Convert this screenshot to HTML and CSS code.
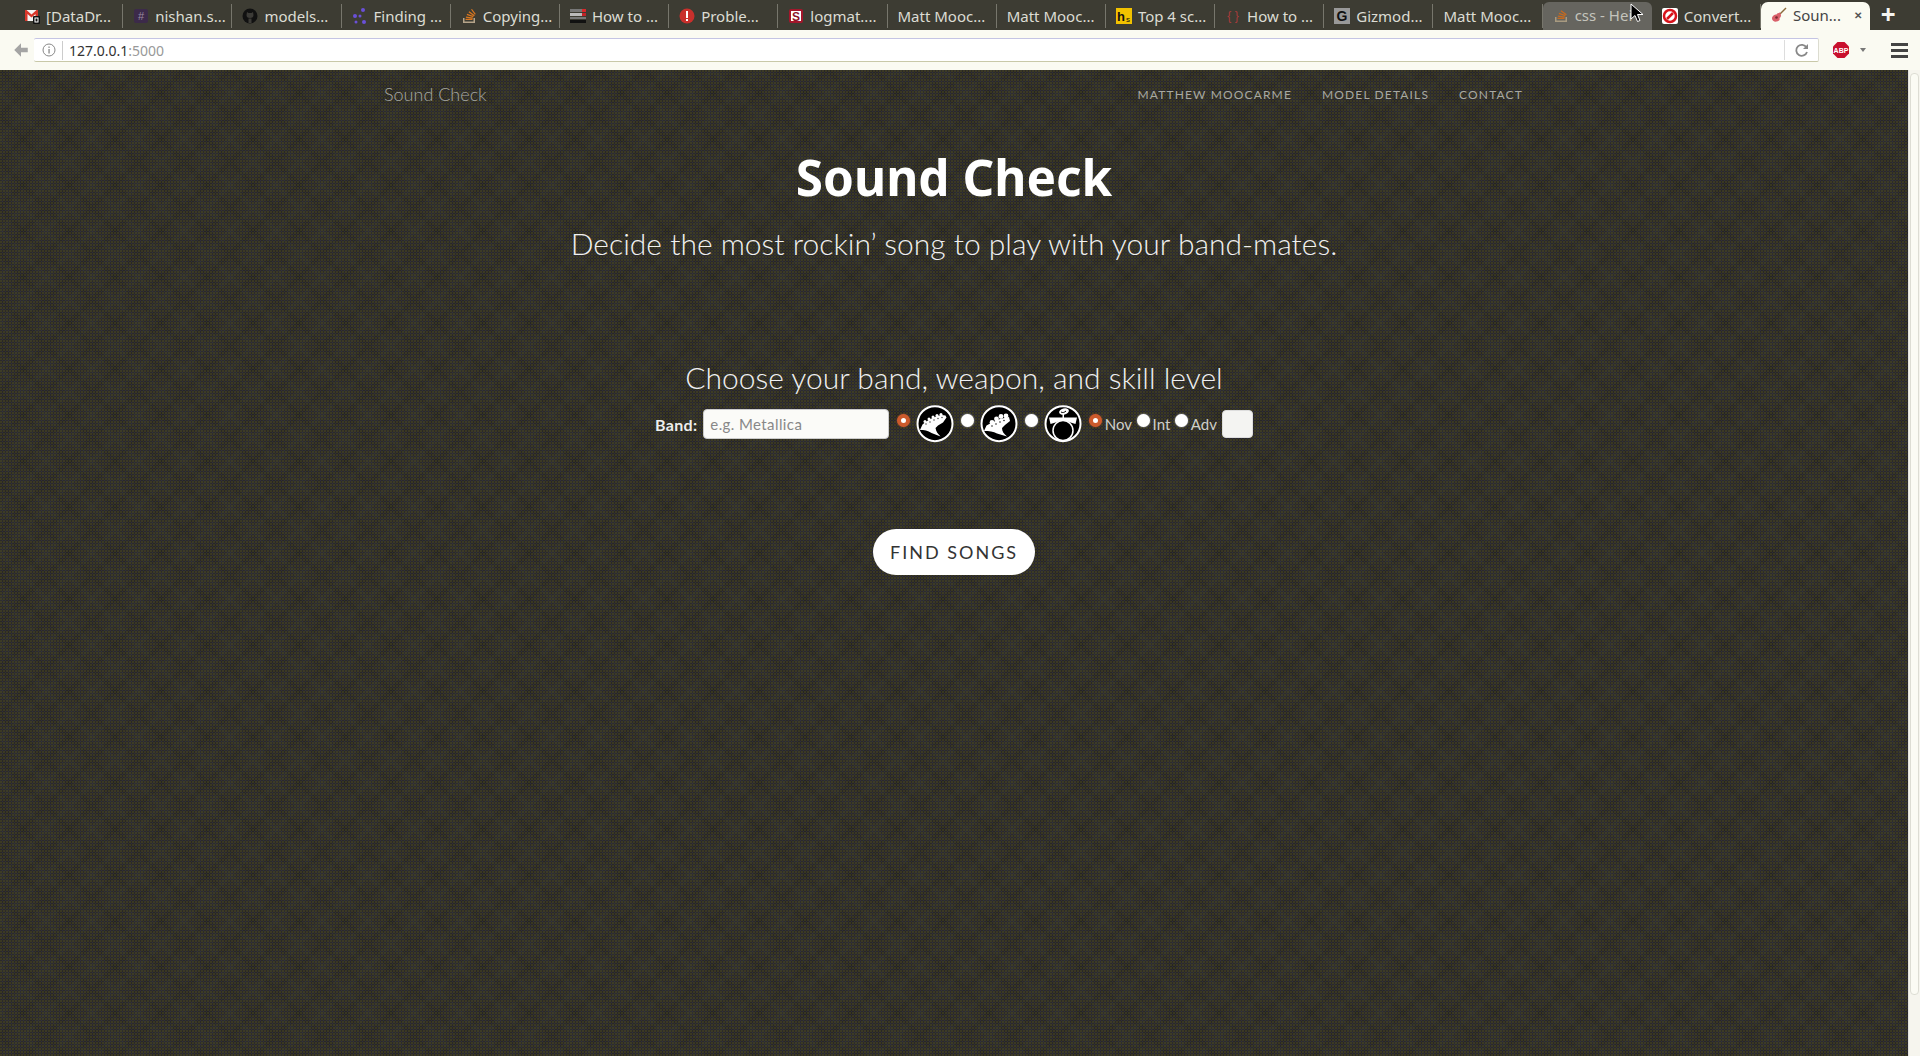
FILE: index.html
```html
<!DOCTYPE html>
<html lang="en">

<head>
    <meta charset="UTF-8">
    <meta name="viewport" content="width=device-width, initial-scale=1.0">
    <title>Sound Check</title>
    <link rel="stylesheet" href="styles.css">
</head>

<body>
    <!-- browser chrome -->
    <div class="tabstrip">
        <div class="tab">
            <svg class="favicon" viewBox="0 0 16 16"><rect x="1" y="2" width="13" height="11" fill="#f4f4f4"/><path d="M1 2v11h2.500V6L7.500 9.500 11.500 6v7H14V2h-1.500L7.500 6.500 2.500 2z" fill="#d8362a"/><rect x="9" y="8" width="7" height="8" rx="1" fill="#111"/><rect x="11" y="10" width="3" height="4" fill="none" stroke="#fff"/></svg>
            <span class="tab-label">[DataDr...</span>
        </div>
        <div class="tab">
            <svg class="favicon" viewBox="0 0 16 16"><rect x="1" y="1" width="14" height="14" rx="2" fill="#3c2a4a"/><text x="8" y="12" font-size="11" text-anchor="middle" fill="#9a8aa0" font-family="Liberation Sans">#</text></svg>
            <span class="tab-label">nishan.s...</span>
        </div>
        <div class="tab">
            <svg class="favicon" viewBox="0 0 16 16"><circle cx="8" cy="8" r="7.500" fill="#111"/><path d="M5 4l1.500 1h3L11 4l.5 3c0 2-1 3-3.500 3S4.500 9 4.500 7z" fill="#3c3b37"/><path d="M6.500 10.500h3V15h-3z" fill="#3c3b37"/></svg>
            <span class="tab-label">models...</span>
        </div>
        <div class="tab">
            <svg class="favicon" viewBox="0 0 16 16"><g fill="#6a50d8"><circle cx="3" cy="8" r="2"/><circle cx="11" cy="2" r="2"/><circle cx="8" cy="8" r="1.500"/><circle cx="4" cy="14" r="1.500"/><circle cx="12" cy="14" r="2"/></g></svg>
            <span class="tab-label">Finding ...</span>
        </div>
        <div class="tab">
            <svg class="favicon" viewBox="0 0 16 16"><path d="M2 10v5h12v-5h-1.500v3.500h-9V10z" fill="#b5a48a"/><path d="M4.500 12h7v-1.300h-7zM4.800 9.700l6.900 1 .2-1.200-6.900-1zM5.700 7l6.500 2.300.4-1.200-6.500-2.300zM7.500 4.300l5.500 4 .8-1-5.500-4zM10 1.500l3.800 5.300 1-.8L11 1z" fill="#d9761f"/></svg>
            <span class="tab-label">Copying...</span>
        </div>
        <div class="tab">
            <svg class="favicon" viewBox="0 0 16 16"><rect x="0" y="1" width="12" height="3" fill="#777"/><rect x="12" y="1" width="4" height="3" fill="#d8282a"/><rect x="0" y="5" width="12" height="3" fill="#bbb"/><rect x="12" y="5" width="4" height="3" fill="#c02428"/><rect x="0" y="9" width="16" height="2" fill="#777"/><rect x="0" y="12" width="16" height="3" fill="#111"/></svg>
            <span class="tab-label">How to ...</span>
        </div>
        <div class="tab">
            <svg class="favicon" viewBox="0 0 16 16"><circle cx="8" cy="8" r="7.500" fill="#c9302c"/><rect x="7" y="3" width="2" height="7" fill="#fff"/><rect x="7" y="11" width="2" height="2" fill="#fff"/></svg>
            <span class="tab-label">Proble...</span>
        </div>
        <div class="tab">
            <svg class="favicon" viewBox="0 0 16 16"><rect x="1" y="1" width="14" height="14" rx="2" fill="#a3162b"/><rect x="3" y="3" width="10" height="10" fill="#fff"/><text x="8" y="12.500" font-size="12" font-weight="700" text-anchor="middle" fill="#8c1226" font-family="Liberation Sans">S</text></svg>
            <span class="tab-label">logmat....</span>
        </div>
        <div class="tab no-icon"><span class="tab-label">Matt Mooc...</span></div>
        <div class="tab no-icon"><span class="tab-label">Matt Mooc...</span></div>
        <div class="tab">
            <svg class="favicon" viewBox="0 0 16 16"><rect width="16" height="16" fill="#f2c200"/><text x="5" y="13" font-size="13" font-weight="700" text-anchor="middle" fill="#111" font-family="Liberation Sans">h</text><text x="12" y="14" font-size="8" text-anchor="middle" fill="#111" font-family="Liberation Sans">s</text></svg>
            <span class="tab-label">Top 4 sc...</span>
        </div>
        <div class="tab">
            <svg class="favicon" viewBox="0 0 16 16"><text x="8" y="12" font-size="12" text-anchor="middle" fill="#a83b3b" font-family="Liberation Sans">{ }</text></svg>
            <span class="tab-label">How to ...</span>
        </div>
        <div class="tab">
            <svg class="favicon" viewBox="0 0 16 16"><rect width="16" height="16" fill="#999"/><text x="8" y="13" font-size="14" font-weight="700" text-anchor="middle" fill="#111" font-family="Liberation Sans">G</text></svg>
            <span class="tab-label">Gizmod...</span>
        </div>
        <div class="tab no-icon"><span class="tab-label">Matt Mooc...</span></div>
        <div class="tab hovered">
            <svg class="favicon" viewBox="0 0 16 16"><path d="M2 10v5h12v-5h-1.500v3.500h-9V10z" fill="#a89a80"/><path d="M4.500 12h7v-1.300h-7zM4.800 9.700l6.900 1 .2-1.200-6.900-1zM5.700 7l6.500 2.300.4-1.200-6.500-2.300zM7.500 4.300l5.500 4 .8-1-5.500-4z" fill="#c46a20"/></svg>
            <span class="tab-label">css - Hei</span>
        </div>
        <div class="tab">
            <svg class="favicon" viewBox="0 0 16 16"><rect width="16" height="16" rx="2" fill="#fff"/><circle cx="8" cy="8" r="6" fill="none" stroke="#d8141c" stroke-width="2.500"/><path d="M5 11l6-6" stroke="#d8141c" stroke-width="2.500"/></svg>
            <span class="tab-label">Convert...</span>
        </div>
        <div class="tab active">
            <svg class="favicon" viewBox="0 0 16 16"><path d="M15 1l-6 6" stroke="#8a6a3a" stroke-width="1.500"/><path d="M9 5.500c-2 .5-3 1-3.500 2C3.500 7.500 1 9 1 11.500S3.500 15 6 14.500s3-2 2.500-3.500c1-.5 1.500-1.500 1.500-3z" fill="#d9606a"/><circle cx="5.500" cy="10.500" r="1.300" fill="#7c2a30"/></svg>
            <span class="tab-label">Soun...</span>
            <span class="tab-close">&#10005;</span>
        </div>
        <div class="new-tab">+</div>
    </div>

    <div class="toolbar">
        <div class="back-btn">
            <svg viewBox="0 0 16 16" width="18" height="18"><path d="M8 2L2 8l6 6V10h6V6H8z" fill="#a4a4a4"/></svg>
        </div>
        <div class="omnibox">
            <svg class="info-icon" viewBox="0 0 14 14" width="14" height="14"><circle cx="7" cy="7" r="6" fill="none" stroke="#888"/><rect x="6.400" y="6" width="1.300" height="4.500" fill="#888"/><rect x="6.400" y="3.500" width="1.300" height="1.400" fill="#888"/></svg>
            <span class="url"><span class="url-host">127.0.0.1</span>:5000</span>
            <div class="reload">
                <svg viewBox="0 0 16 16" width="16" height="16"><path d="M12.500 5.500A5.500 5.500 0 1 0 13 10" fill="none" stroke="#888" stroke-width="1.800"/><path d="M14 2v5H9z" fill="#888"/></svg>
            </div>
        </div>
        <svg class="abp" viewBox="0 0 18 18" width="18" height="18"><path d="M5.500 1h7L17 5.500v7L12.500 17h-7L1 12.500v-7z" fill="#c8102e"/><text x="9" y="12" font-size="7" font-weight="700" text-anchor="middle" fill="#fff" font-family="Liberation Sans">ABP</text></svg>
        <span class="abp-arrow"></span>
        <div class="menu-btn"><span></span><span></span><span></span></div>
    </div>

    <!-- page -->
    <div class="viewport">
        <div class="page">
            <nav class="navbar">
                <a class="brand">Sound Check</a>
                <div class="nav-links">
                    <a>Matthew Moocarme</a>
                    <a>Model Details</a>
                    <a>Contact</a>
                </div>
            </nav>
            <main>
                <h1>Sound Check</h1>
                <p class="lead">Decide the most rockin’ song to play with your band-mates.</p>
                <h2>Choose your band, weapon, and skill level</h2>
                <form class="band-form">
                    <label class="band-label" for="band">Band:</label>
                    <input type="text" id="band" class="band-input" placeholder="e.g. Metallica">
                    <input type="radio" name="weapon" class="radio first" checked>
                    <svg class="weapon" viewBox="1 2 38 38"><circle cx="20" cy="20.700" r="17.500" fill="#000" stroke="#fff" stroke-width="2"/><path d="M5 27l2.500-5.500 3-2.500 4-2.500 4-2 4-1.500 4-1 4 .5 1 2-3.500 5-5 3-2.500 2.500c.5 3.500 2.500 6 5 8.500l-9-3.500C13 27.500 9 27 5 27z" fill="#fff"/><g fill="#fff"><circle cx="10" cy="18.500" r="1.500"/><circle cx="14" cy="16" r="1.500"/><circle cx="18" cy="14" r="1.500"/><circle cx="22" cy="12.500" r="1.500"/><circle cx="26" cy="11.500" r="1.500"/></g><g fill="#333"><circle cx="11" cy="21" r=".7"/><circle cx="15" cy="19" r=".7"/><circle cx="19" cy="17" r=".7"/><circle cx="23" cy="15.500" r=".7"/><circle cx="27" cy="14.500" r=".7"/></g></svg>
                    <input type="radio" name="weapon" class="radio">
                    <svg class="weapon" viewBox="1 2 38 38"><circle cx="20" cy="20.700" r="17.500" fill="#000" stroke="#fff" stroke-width="2"/><path d="M5 28l2.500-5.500 5.500-3 8-3.500 9-2 1 4-5 4-3 3c0 3.500 2 6 5 8.500l-10-3C14.500 28.500 10 28 5 28z" fill="#fff"/><g fill="#fff"><circle cx="13" cy="19.500" r="2.400"/><circle cx="17.500" cy="16" r="2.400"/><circle cx="22" cy="13.500" r="2.400"/><circle cx="27" cy="13" r="2.400"/></g><g fill="#222"><circle cx="13" cy="23" r=".8"/><circle cx="17" cy="21" r=".8"/><circle cx="21" cy="19" r=".8"/><circle cx="25" cy="17.500" r=".8"/></g></svg>
                    <input type="radio" name="weapon" class="radio">
                    <svg class="weapon" viewBox="1 2 38 38"><circle cx="20" cy="20.700" r="17.500" fill="#000" stroke="#fff" stroke-width="2"/><path d="M6 14.500h28l-1.500 6.500-5-1.500c-4.500-2.500-10.500-2.500-15 0l-5 1.500z" fill="#fff"/><path d="M19.500 11v4h1.500v-4z" fill="#fff"/><ellipse cx="21" cy="8.500" rx="5" ry="3" fill="#fff" transform="rotate(-15 21 8.500)"/><path d="M18 9c1.500 1 3.500.5 5-1" fill="none" stroke="#000"/><circle cx="20" cy="27.500" r="10" fill="#000" stroke="#fff" stroke-width="1.500"/></svg>
                    <input type="radio" name="level" class="radio level" checked>
                    <span class="level-name">Nov</span>
                    <input type="radio" name="level" class="radio level">
                    <span class="level-name">Int</span>
                    <input type="radio" name="level" class="radio level">
                    <span class="level-name">Adv</span>
                    <button type="button" class="submit-btn"></button>
                </form>
                <button type="button" class="find-btn">Find Songs</button>
            </main>
        </div>
        <div class="scrollbar"><div class="scroll-thumb"></div></div>
    </div>
    <div class="cursor">
        <svg viewBox="0 0 14 20" width="14" height="20"><path d="M1 1v15l4-3.500 2.500 6 2.500-1-2.500-6H13z" fill="#000" stroke="#fff"/></svg>
    </div>
</body>

</html>
```

FILE: styles.css
```css
* {
    box-sizing: border-box;
}

body {
    margin: 0;
    height: 1056px;
    overflow: hidden;
    display: flex;
    flex-direction: column;
    font-family: Lato, Arial, sans-serif;
    background-color: #2a2926;
    position: relative;
}

/* browser chrome */

.tabstrip {
    height: 30px;
    display: flex;
    align-items: stretch;
    padding-left: 14px;
    background-color: #3d3c33;
    font-family: "Noto Sans", sans-serif;
    font-size: 15px;
    color: #dcdcd4;
}

.tab {
    width: 109.2px;
    display: flex;
    align-items: center;
    gap: 6px;
    padding-left: 10px;
    border-right: 1px solid #77766c;
    margin: 4px 0 2px;
    white-space: nowrap;
    overflow: hidden;
}

.favicon {
    width: 16px;
    height: 16px;
    flex: none;
}

.tab.hovered {
    background-color: #66655f;
    border-radius: 6px 6px 0 0;
    border-right: none;
    margin: 2px 0 0;
    padding-bottom: 2px;
    color: #c4c4bc;
}

.tab.active {
    background-color: #fbfbf2;
    color: #444;
    border: none;
    border-radius: 7px 7px 0 0;
    margin: 2px 0 0;
    padding-bottom: 2px;
    position: relative;
}

.tab-close {
    position: absolute;
    right: 8px;
    font-size: 10px;
    font-weight: 700;
    color: #555;
}

.new-tab {
    width: 36px;
    text-align: center;
    font-size: 26px;
    line-height: 28px;
    font-weight: 700;
    color: #f4f4f0;
}

.toolbar {
    height: 40px;
    display: flex;
    align-items: center;
    background-color: #fafaf2;
    padding: 0 8px;
}

.back-btn {
    width: 26px;
    display: flex;
    justify-content: center;
}

.omnibox {
    width: 1785px;
    height: 24px;
    display: flex;
    align-items: center;
    background-color: #fff;
    border-top: 1px solid #c4c4e4;
    border-bottom: 1px solid #c8c8a8;
    border-right: 1px solid #dcdcd0;
    border-radius: 2px;
    font-family: "Noto Sans", sans-serif;
    font-size: 14px;
    color: #999;
}

.info-icon {
    margin-left: 8px;
}

.url {
    margin-left: 6px;
    padding-left: 6px;
    border-left: 1px solid #ccc;
    flex: 1;
}

.url-host {
    color: #333;
}

.reload {
    width: 34px;
    height: 20px;
    display: flex;
    align-items: center;
    justify-content: center;
    border-left: 1px solid #ddd;
}

.abp {
    margin-left: 13px;
}

.abp-arrow {
    margin-left: 10px;
    border-left: 3px solid transparent;
    border-right: 3px solid transparent;
    border-top: 4px solid #777;
}

.menu-btn {
    margin-left: 25px;
    width: 17px;
    display: flex;
    flex-direction: column;
    gap: 3px;
}

.menu-btn span {
    height: 3px;
    background-color: #444;
}

/* page */

.viewport {
    flex: 1;
    display: flex;
    min-height: 0;
}

.page {
    flex: 1;
    color: #fff;
    background-color: #2b2a28;
    background-image:
        radial-gradient(circle at 1px 1px, rgba(84, 80, 30, 0.4) 1px, transparent 1px),
        radial-gradient(circle at 2.5px 2.5px, rgba(56, 54, 96, 0.4) 1px, transparent 1px),
        linear-gradient(45deg, transparent 46%, rgba(0, 0, 0, 0.07) 46% 54%, transparent 54%),
        linear-gradient(-45deg, transparent 46%, rgba(0, 0, 0, 0.07) 46% 54%, transparent 54%),
        linear-gradient(45deg, transparent 46%, rgba(255, 255, 255, 0.012) 46% 54%, transparent 54%),
        linear-gradient(-45deg, transparent 46%, rgba(255, 255, 255, 0.012) 46% 54%, transparent 54%);
    background-size: 3px 3px, 3px 3px, 46px 46px, 46px 46px, 46px 46px, 46px 46px;
    background-position: 0 0, 0 0, 0 0, 0 0, 23px 0, 23px 0;
}

.scrollbar {
    width: 12px;
    background-color: #f6f5ee;
    border-left: 1px solid #e4e4dc;
    padding: 3px 1px;
}

.scroll-thumb {
    height: 922px;
    background-color: #fbfbf4;
    border: 1px solid #ddddd4;
    border-radius: 4px;
}

.navbar {
    width: 1140px;
    height: 48px;
    margin: 0 auto;
    display: flex;
    align-items: center;
    justify-content: space-between;
}

.brand {
    font-size: 18px;
    font-weight: 300;
    color: #a8a8a2;
}

.nav-links {
    display: flex;
    gap: 30px;
    padding-top: 1px;
    padding-right: 1px;
    font-size: 12px;
    letter-spacing: 1.15px;
    text-transform: uppercase;
    color: #a8a8a2;
}

main {
    display: flex;
    flex-direction: column;
    align-items: center;
}

h1 {
    margin: 24px 0 0;
    font-family: "Noto Sans", sans-serif;
    font-size: 49.5px;
    line-height: 70px;
    font-weight: 700;
}

.lead {
    margin: 11px 0 0;
    font-size: 30px;
    line-height: 40px;
    font-weight: 300;
    color: #f0f0f0;
}

h2 {
    margin: 94px 0 0;
    font-size: 30px;
    line-height: 40px;
    font-weight: 300;
    color: #f0f0f0;
}

.band-form {
    margin-top: 8px;
    height: 38px;
    display: flex;
    align-items: center;
    font-size: 15px;
    color: #ddd;
}

.band-label {
    font-size: 16px;
    letter-spacing: 0.3px;
    font-weight: 700;
    margin-right: 6px;
    color: #eee;
}

.band-input {
    width: 186px;
    height: 30px;
    padding: 0 6px;
    border: 1px solid #ccc;
    border-radius: 4px;
    background-color: #fbfbf8;
    font: inherit;
    letter-spacing: 0.4px;
}

.band-input::placeholder {
    color: #888;
}

.radio {
    appearance: none;
    width: 13px;
    height: 13px;
    margin: 0 0 7px;
    border-radius: 50%;
    background-color: #fff;
    box-shadow: 0 0 2px rgba(255, 255, 255, 0.7);
    flex: none;
}

.radio.first {
    margin-left: 8px;
}

.radio:checked {
    border: 4px solid #cc5a2c;
    box-shadow: 0 0 2px rgba(204, 90, 44, 0.7);
}

.radio.level {
    margin-right: 2.5px;
}

.weapon {
    width: 38px;
    height: 38px;
    flex: none;
    margin: 0 7.5px 0 5.5px;
}

.level-name {
    margin-right: 5px;
    color: #cfcfca;
}

.submit-btn {
    width: 31px;
    height: 28px;
    border: 1px solid #ddd;
    border-radius: 4px;
    background-color: #f4f4f2;
}

.find-btn {
    margin-top: 86px;
    width: 162px;
    height: 46px;
    border: none;
    border-radius: 23px;
    background-color: #fff;
    font-family: Lato, Arial, sans-serif;
    font-size: 18px;
    letter-spacing: 2px;
    text-transform: uppercase;
    color: #333;
}

.cursor {
    position: absolute;
    left: 1630px;
    top: 3px;
}
```
